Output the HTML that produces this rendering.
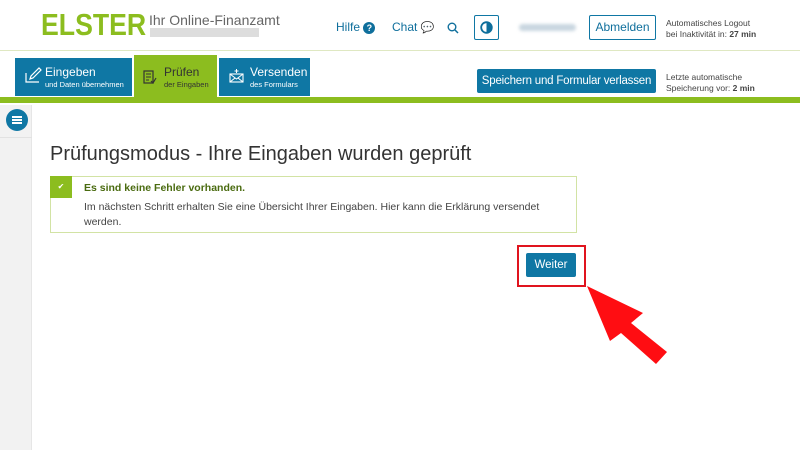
<!DOCTYPE html>
<html><head><meta charset="utf-8"><style>
*{margin:0;padding:0;box-sizing:border-box}
body{width:800px;height:450px;overflow:hidden;background:#fff;font-family:"Liberation Sans",sans-serif;color:#333;position:relative}
.a{position:absolute;white-space:nowrap}
.blue{background:#0f77a4;color:#fff}
</style></head><body>
<div class="a" style="left:41px;top:7px;font-size:31px;font-weight:bold;color:#8cbd1f;transform:scaleX(0.86);transform-origin:0 0">ELSTER</div>
<div class="a" style="left:149px;top:12px;font-size:14px;color:#666">Ihr Online-Finanzamt</div>
<div class="a" style="left:150px;top:28px;width:109px;height:9px;background:#ddd"></div>
<div class="a" style="left:336px;top:20px;font-size:12px;color:#0f6f9c">Hilfe <span style="display:inline-block;width:12px;height:12px;border-radius:50%;background:#0f6f9c;color:#fff;font-size:9px;text-align:center;line-height:12px;font-weight:bold">?</span></div>
<div class="a" style="left:392px;top:20px;font-size:12px;color:#0f6f9c">Chat <span style="font-size:11px">💬</span></div>
<svg class="a" style="left:447px;top:22px" width="12" height="12"><circle cx="5" cy="5" r="3.8" fill="none" stroke="#0f6f9c" stroke-width="1.4"/><line x1="8" y1="8" x2="11" y2="11" stroke="#0f6f9c" stroke-width="1.5"/></svg>
<div class="a" style="left:474px;top:15px;width:25px;height:25px;border:1px solid #0f77a4;border-radius:2px"></div>
<svg class="a" style="left:480px;top:21px" width="13" height="13"><circle cx="6.5" cy="6.5" r="5.3" fill="none" stroke="#0f6f9c" stroke-width="1.8"/><path d="M6.5 1.2 A5.3 5.3 0 0 1 6.5 11.8Z" fill="#0f6f9c"/></svg>
<div class="a" style="left:519px;top:24px;width:57px;height:7px;background:#c9d6e0;border-radius:4px;filter:blur(1.5px)"></div>
<div class="a" style="left:589px;top:15px;width:67px;height:25px;border:1px solid #0f77a4;border-radius:2px;color:#0f6f9c;font-size:12px;text-align:center;line-height:23px">Abmelden</div>
<div class="a" style="left:666px;top:18px;font-size:8.5px;line-height:11px;color:#444">Automatisches Logout<br>bei Inaktivität in: <b>27 min</b></div>
<div class="a" style="left:0;top:50px;width:800px;height:1px;background:#dfe8c2"></div>
<div class="a blue" style="left:15px;top:58px;width:117px;height:38px"></div>
<svg class="a" style="left:24px;top:66px" width="18" height="18"><path d="M2 7v9h13" fill="none" stroke="#fff" stroke-width="1.2"/><path d="M6 13l1-3 8-8 2 2-8 8z" fill="none" stroke="#fff" stroke-width="1.2"/></svg>
<div class="a" style="left:45px;top:65px;color:#fff;font-size:12px">Eingeben</div>
<div class="a" style="left:45px;top:80px;color:#fff;font-size:7.5px">und Daten übernehmen</div>
<div class="a" style="left:134px;top:55px;width:83px;height:45px;background:#8cbd1f"></div>
<svg class="a" style="left:143px;top:70px" width="14" height="16"><rect x="1" y="1" width="9" height="12" fill="none" stroke="#333" stroke-width="1.2"/><path d="M3 4h5M3 7h5M3 10h3" stroke="#333"/><path d="M8 11l2 2 3-5" fill="none" stroke="#333" stroke-width="1.2"/></svg>
<div class="a" style="left:164px;top:65px;color:#333;font-size:12px">Prüfen</div>
<div class="a" style="left:164px;top:80px;color:#333;font-size:7.5px">der Eingaben</div>
<div class="a blue" style="left:219px;top:58px;width:91px;height:38px"></div>
<svg class="a" style="left:229px;top:68px" width="16" height="16"><rect x="1" y="6" width="13" height="8" fill="none" stroke="#fff" stroke-width="1.1"/><path d="M1 6l6.5 5 6.5-5M1 14l5-4M14 14l-5-4M7.5 1v4M5.5 3h4" fill="none" stroke="#fff" stroke-width="1"/></svg>
<div class="a" style="left:250px;top:65px;color:#fff;font-size:12px">Versenden</div>
<div class="a" style="left:250px;top:80px;color:#fff;font-size:7.5px">des Formulars</div>
<div class="a blue" style="left:477px;top:69px;width:179px;height:24px;border-radius:2px;font-size:11.5px;text-align:center;line-height:24px;letter-spacing:-0.2px">Speichern und Formular verlassen</div>
<div class="a" style="left:666px;top:72px;font-size:8.5px;line-height:11px;color:#444">Letzte automatische<br>Speicherung vor: <b>2 min</b></div>
<div class="a" style="left:0;top:97px;width:800px;height:6px;background:#8cbd1f"></div>
<div class="a" style="left:0;top:105px;width:32px;height:345px;background:#f2f2f2;border-right:1px solid #e6e6e6"></div>
<div class="a" style="left:0;top:137px;width:32px;height:1px;background:#e2e2e2"></div>
<div class="a" style="left:6px;top:109px;width:22px;height:22px;border-radius:50%;background:#0f77a4"></div>
<div class="a" style="left:12px;top:116px;width:10px;height:8px;border-top:2px solid #fff;border-bottom:2px solid #fff"></div>
<div class="a" style="left:12px;top:119px;width:10px;height:2px;background:#fff"></div>
<div class="a" style="left:50px;top:143px;font-size:20px;color:#333">Prüfungsmodus - Ihre Eingaben wurden geprüft</div>
<div class="a" style="left:50px;top:176px;width:527px;height:57px;border:1px solid #d2e3a4"></div>
<div class="a" style="left:50px;top:176px;width:22px;height:22px;background:#8cbd1f;color:#fff;font-size:8px;text-align:center;line-height:22px">✔</div>
<div class="a" style="left:84px;top:182px;font-size:10.5px;font-weight:bold;color:#4a6b10">Es sind keine Fehler vorhanden.</div>
<div class="a" style="left:84px;top:200px;width:480px;white-space:normal;font-size:10.5px;line-height:15px;color:#444">Im nächsten Schritt erhalten Sie eine Übersicht Ihrer Eingaben. Hier kann die Erklärung versendet werden.</div>
<div class="a" style="left:517px;top:245px;width:69px;height:42px;border:2px solid #e0141e"></div>
<div class="a blue" style="left:526px;top:253px;width:50px;height:24px;border-radius:2px;font-size:11.5px;text-align:center;line-height:24px">Weiter</div>
<svg class="a" style="left:0;top:0" width="800" height="450"><polygon points="587,286 643,313 631,323 667,352 656,364 621,333 610,341" fill="#ff0d12"/></svg>
</body></html>
